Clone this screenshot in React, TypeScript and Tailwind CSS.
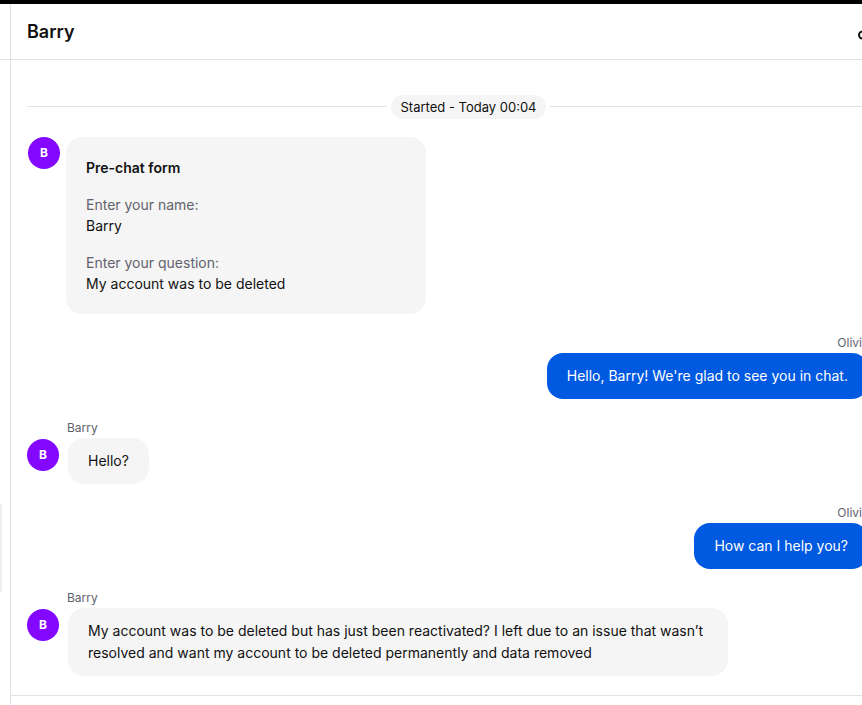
type FormField = { label: string; value: string }

type Message = {
  id: number
  author: string
  own: boolean
  text: string
}

const fields: FormField[] = [
  { label: 'Enter your name:', value: 'Barry' },
  { label: 'Enter your question:', value: 'My account was to be deleted' },
]

const messages: Message[] = [
  { id: 1, author: 'Olivi', own: true, text: "Hello, Barry! We're glad to see you in chat." },
  { id: 2, author: 'Barry', own: false, text: 'Hello?' },
  { id: 3, author: 'Olivi', own: true, text: 'How can I help you?' },
  {
    id: 4,
    author: 'Barry',
    own: false,
    text: 'My account was to be deleted but has just been reactivated? I left due to an issue that wasn’t resolved and want my account to be deleted permanently and data removed',
  },
]

function Avatar() {
  return (
    <div className="flex size-8 shrink-0 items-center justify-center rounded-full bg-[#8408ff] text-xs font-bold text-white">
      B
    </div>
  )
}

function PreChatForm() {
  return (
    <div className="flex items-start gap-1.5 pl-px">
      <Avatar />
      <section className="w-[360px] space-y-4 rounded-2xl bg-[#f5f5f5] p-5 text-sm leading-[21px]">
        <h2 className="font-semibold">Pre-chat form</h2>
        {fields.map((field) => (
          <dl key={field.label}>
            <dt className="text-[#62626d]">{field.label}</dt>
            <dd>{field.value}</dd>
          </dl>
        ))}
      </section>
    </div>
  )
}

function ChatMessage({ message }: { message: Message }) {
  if (message.own) {
    return (
      <div className="mr-[42px] flex flex-col items-end">
        <div className="mb-0.5 pr-1.5 text-xs text-[#62626d]">{message.author}</div>
        <p className="rounded-2xl bg-[#0059e1] px-5 py-3 text-sm leading-[22px] text-white">
          {message.text}
        </p>
      </div>
    )
  }

  return (
    <div>
      <div className="mb-0.5 pl-10 text-xs text-[#62626d]">{message.author}</div>
      <div className="flex items-start gap-[9px]">
        <div className="pt-px">
          <Avatar />
        </div>
        <p className="max-w-[660px] rounded-2xl bg-[#f5f5f5] px-5 py-3 text-sm leading-[22px]">
          {message.text}
        </p>
      </div>
    </div>
  )
}

export default function App() {
  return (
    <div className="flex min-h-screen flex-col overflow-hidden border-t-4 border-black bg-white font-['Inter',sans-serif] text-[#111111]">
      <div className="flex flex-1">
        <aside className="flex w-2.5 shrink-0 flex-col">
          <div className="h-14 border-b border-[#e2e2e4]" />
          <div className="mt-[444px] h-[88px] w-0.5 rounded-r-sm bg-[#eeeeee]" />
        </aside>

        {/* the chat pane runs on past the right edge of the window */}
        <main className="-mr-16 flex min-w-0 flex-1 flex-col border-l border-[#e2e2e4]">
          <header className="flex h-14 items-center justify-between border-b border-[#e2e2e4] pr-[52px] pl-4">
            <h1 className="text-lg font-semibold">Barry</h1>
            <button type="button" aria-label="Conversation link" className="mt-1.5">
              <svg width="16" height="16" viewBox="0 0 16 16" fill="none" stroke="currentColor" strokeWidth="2">
                <circle cx="4.6" cy="8" r="3.6" />
                <path d="M8.2 8H15M13 8v3" />
              </svg>
            </button>
          </header>

          <div className="flex flex-1 flex-col px-4 pt-[35px] pb-[19px]">
            <div className="mb-[18px] flex items-center gap-1">
              <div className="h-0.5 flex-1 border-t border-[#e2e2e4]" />
              <div className="rounded-full bg-[#f5f5f5] px-2.5 py-0.5 text-[13px] leading-5">
                Started - Today 00:04
              </div>
              <div className="h-0.5 flex-1 border-t border-[#e2e2e4]" />
            </div>

            <div className="space-y-[21px]">
              <PreChatForm />
              {messages.map((message) => (
                <ChatMessage key={message.id} message={message} />
              ))}
            </div>
          </div>

          <footer className="h-2.5 border-t border-[#e2e2e4]" />
        </main>
      </div>
    </div>
  )
}
